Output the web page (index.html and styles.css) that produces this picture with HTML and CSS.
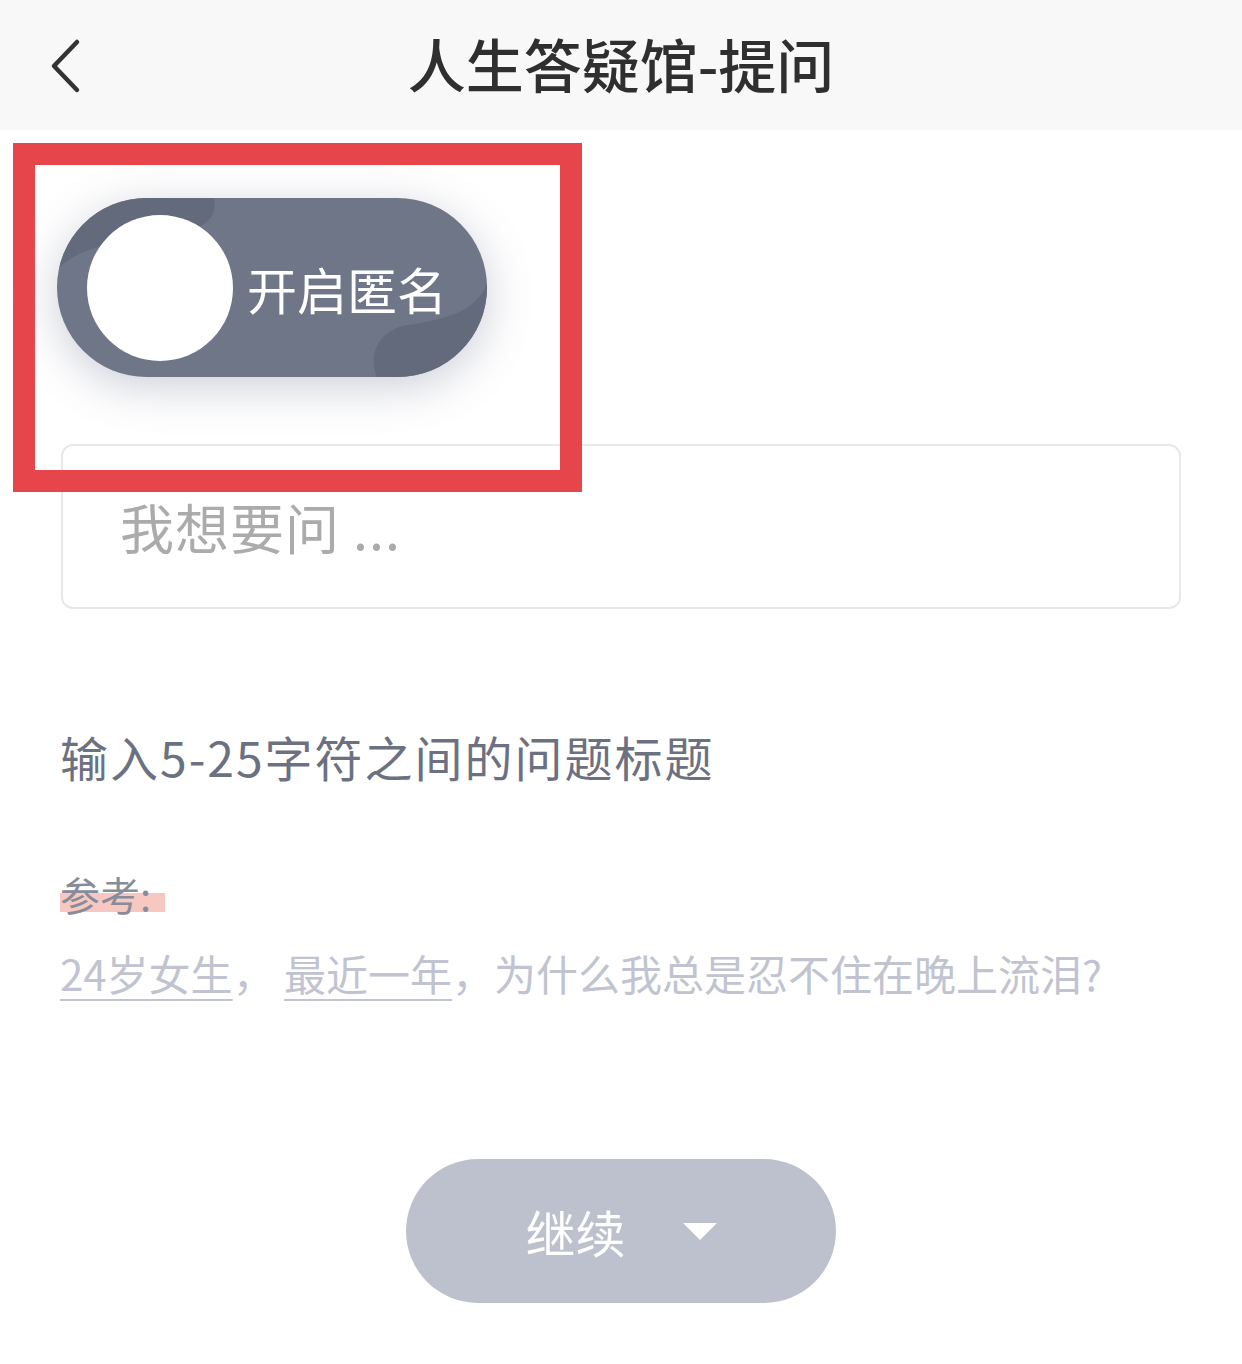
FILE: index.html
```html
<!DOCTYPE html>
<html lang="zh-CN">
<head>
    <meta charset="UTF-8">
    <title>人生答疑馆-提问</title>
    <meta name="viewport" content="width=device-width, initial-scale=1.0">
    <link rel="stylesheet" href="styles.css">
</head>
<body>
    <div class="header">
        <a class="back" href="#">
            <svg width="40" height="60" viewBox="0 0 40 60"><path d="M28 4 L5 28 L28 52" fill="none" stroke="#333" stroke-width="4.5" stroke-linecap="round" stroke-linejoin="round"/></svg>
        </a>
        <h1>人生答疑馆-提问</h1>
    </div>

    <div class="page">
        <div class="toggle">
            <svg class="toggle-bg" viewBox="0 0 430 179" preserveAspectRatio="none">
                <path d="M0 0 H157 C160 18 152 28 125 34 C80 42 25 44 0 72 Z" fill="#626a7c"/>
                <path d="M430 85 C420 115 385 122 345 128 C318 136 312 160 320 179 H430 Z" fill="#626a7c"/>
            </svg>
            <span class="knob"></span>
            <span class="toggle-text">开启匿名</span>
        </div>

        <div class="ask">
            <input type="text" placeholder="我想要问 ...">
        </div>

        <p class="hint">输入5-25字符之间的问题标题</p>
        <p class="ref"><span class="mark">参考:</span></p>
        <p class="example"><u>24岁女生</u>， <u>最近一年</u>，为什么我总是忍不住在晚上流泪?</p>

        <div class="actions">
            <button class="next">继续 <span class="caret"></span></button>
        </div>
    </div>

    <div class="highlight-box"></div>
</body>
</html>
```

FILE: styles.css
```css
body { margin: 0; background: #fff; font-family: "Noto Sans CJK SC", "Noto Sans", sans-serif; position: relative; }
.header { height: 130px; background: #f8f8f8; display: flex; align-items: center; justify-content: center; position: relative; }
.header h1 { margin: 0 0 4px; font-size: 58px; font-weight: 500; color: #2f2f2f; line-height: 1; }
.back { position: absolute; left: 49px; top: 38px; display: block; width: 40px; height: 60px; }
.page { padding: 68px 61px 0 61px; }
.toggle {
    position: relative; width: 430px; height: 179px; margin-left: -4px; border-radius: 90px; overflow: hidden;
    background: #6f7688; display: flex; align-items: center; box-shadow: 0 10px 45px rgba(90,96,125,0.3);
}
.toggle-bg { position: absolute; left: 0; top: 0; width: 100%; height: 100%; }
.knob { position: relative; width: 146px; height: 146px; border-radius: 50%; background: #fff; margin-left: 30px; }
.toggle-text { position: relative; color: #fff; font-size: 50px; margin-left: 14px; line-height: 1; }
.ask { margin-top: 67px; }
.ask input {
    box-sizing: border-box; width: 1120px; height: 165px; border: 2px solid #e8e8e8; border-radius: 12px;
    padding: 0 0 0 57px; font-family: inherit; font-size: 54px; color: #333; outline: none;
}
.ask input::placeholder { color: #ababab; letter-spacing: 1px; }
.hint { margin: 116px 0 0 -1px; font-size: 48px; line-height: 62px; letter-spacing: 2px; color: #6c7182; }
.ref { margin: 81px 0 0 -1px; font-size: 40px; line-height: 52px; color: #878c9b; }
.mark { display: inline-block; padding-right: 14px; background: linear-gradient(to bottom, transparent 25px, #f6c8c1 25px, #f6c8c1 44px, transparent 44px); }
.example { margin: 25px 0 0 -1px; font-size: 42px; line-height: 56px; color: #c1c4d0; white-space: nowrap; }
.example u { text-decoration-thickness: 2px; text-underline-offset: 8px; }
.actions { margin-top: 158px; display: flex; justify-content: center; }
.next {
    width: 430px; height: 144px; border: none; border-radius: 72px; background: #bdc1cd; color: #fff;
    font-family: inherit; font-size: 50px; display: flex; align-items: center; justify-content: center; gap: 57px; cursor: pointer;
}
.caret { width: 0; height: 0; border-left: 17px solid transparent; border-right: 17px solid transparent; border-top: 17px solid #fff; }
.highlight-box { position: absolute; left: 13px; top: 143px; width: 569px; height: 349px; box-sizing: border-box; border: 22px solid #e6454b; }
```
